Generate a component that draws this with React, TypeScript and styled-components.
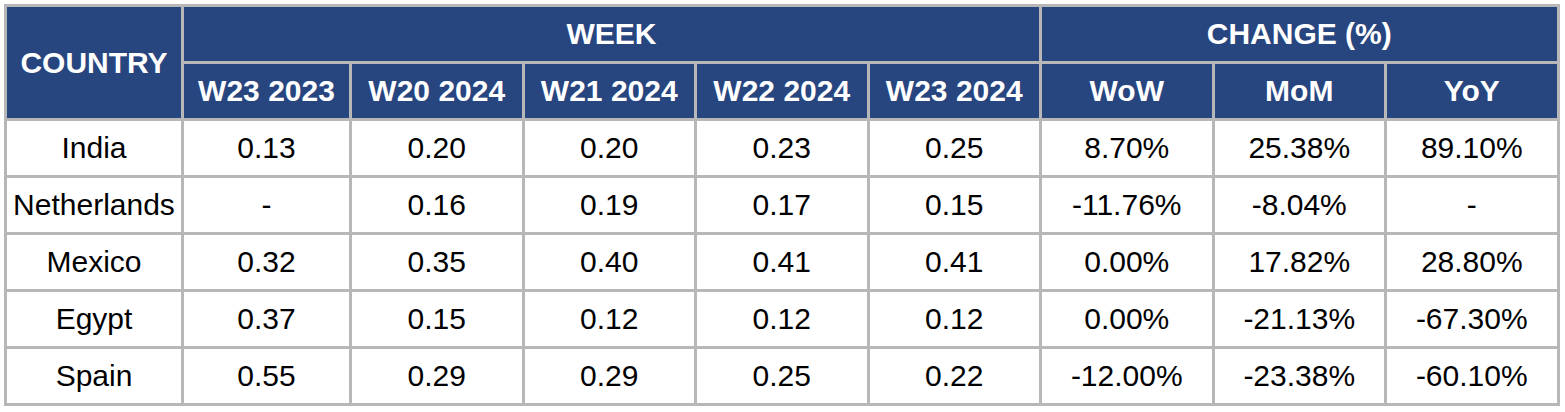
import React from "react";
import styled, { createGlobalStyle } from "styled-components";

const Global = createGlobalStyle`
  html, body { margin: 0; padding: 0; background: #ffffff; }
  body { font-family: "Liberation Sans", Arial, sans-serif; }
`;

const Page = styled.div`
  padding: 4px 0 0 4px;
`;

const Grid = styled.div`
  display: grid;
  grid-template-columns: 174px 165px repeat(7, 169.5px);
  grid-template-rows: repeat(7, 54px);
  gap: 3px;
  padding: 3px;
  background: #b7b7b7;
  width: max-content;
`;

const HeadCell = styled.div<{ $col?: string; $row?: string }>`
  display: flex;
  align-items: center;
  justify-content: center;
  background: #27457f;
  color: #ffffff;
  font-weight: 700;
  font-size: 30px;
  white-space: nowrap;
  grid-column: ${(p) => p.$col ?? "auto"};
  grid-row: ${(p) => p.$row ?? "auto"};
`;

const Cell = styled.div`
  display: flex;
  align-items: center;
  justify-content: center;
  background: #ffffff;
  color: #000000;
  font-size: 30px;
  white-space: nowrap;
`;

const weeks = ["W23 2023", "W20 2024", "W21 2024", "W22 2024", "W23 2024"];
const changes = ["WoW", "MoM", "YoY"];

const rows: string[][] = [
  ["India", "0.13", "0.20", "0.20", "0.23", "0.25", "8.70%", "25.38%", "89.10%"],
  ["Netherlands", "-", "0.16", "0.19", "0.17", "0.15", "-11.76%", "-8.04%", "-"],
  ["Mexico", "0.32", "0.35", "0.40", "0.41", "0.41", "0.00%", "17.82%", "28.80%"],
  ["Egypt", "0.37", "0.15", "0.12", "0.12", "0.12", "0.00%", "-21.13%", "-67.30%"],
  ["Spain", "0.55", "0.29", "0.29", "0.25", "0.22", "-12.00%", "-23.38%", "-60.10%"],
];

export default function App() {
  return (
    <>
      <Global />
      <Page>
        <Grid>
          <HeadCell $col="1" $row="1 / span 2">COUNTRY</HeadCell>
          <HeadCell $col="2 / span 5" $row="1">WEEK</HeadCell>
          <HeadCell $col="7 / span 3" $row="1">CHANGE (%)</HeadCell>
          {weeks.map((w) => (
            <HeadCell key={w} $row="2">{w}</HeadCell>
          ))}
          {changes.map((c) => (
            <HeadCell key={c} $row="2">{c}</HeadCell>
          ))}
          {rows.map((r) =>
            r.map((v, i) => <Cell key={r[0] + i}>{v}</Cell>)
          )}
        </Grid>
      </Page>
    </>
  );
}
